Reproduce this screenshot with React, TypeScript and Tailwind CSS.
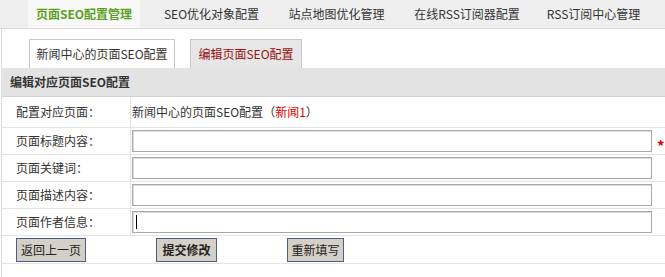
import React from 'react';

const topTabs = [
  { label: 'SEO优化对象配置', ml: 'ml-[28px]', w: 'w-[87px]' },
  { label: '站点地图优化管理', ml: 'ml-[35px]', w: 'w-[93px]' },
  { label: '在线RSS订阅器配置', ml: 'ml-[35px]', w: 'w-[98px]' },
  { label: 'RSS订阅中心管理', ml: 'ml-[34px]', w: 'w-[87px]' },
];

const fields = [
  { label: '页面标题内容：', required: true },
  { label: '页面关键词：' },
  { label: '页面描述内容：' },
  { label: '页面作者信息：', caret: true },
];

const FakeInput: React.FC<{ caret?: boolean }> = ({ caret }) => (
  <div className="ml-[1px] h-[22px] w-[520px] border border-[#a9a9a9] bg-white shadow-[inset_1px_1px_0_#dcdcdc] flex items-center">
    {caret && <div className="ml-[3px] h-[14px] w-px bg-black" />}
  </div>
);

const App: React.FC = () => {
  return (
    <div className="w-[665px] h-[277px] overflow-hidden bg-white text-[12px] leading-none text-[#333] font-['SimSun','Noto_Sans_CJK_SC',sans-serif]">
      {/* top tabs */}
      <div className="h-[29px] bg-[#efefef] border-b border-[#dadada] flex items-stretch">
        <div className="ml-[28px] w-[112px] bg-[#f8f8f8] flex items-center justify-center font-bold text-[#5b9f1f]">
          页面SEO配置管理
        </div>
        {topTabs.map((t) => (
          <div key={t.label} className={`${t.ml} ${t.w} flex items-center justify-center whitespace-nowrap`}>
            {t.label}
          </div>
        ))}
      </div>

      <div className="ml-[1px] h-[248px] border-l border-[#dedede]">
        {/* sub tabs */}
        <div className="h-[39px] flex items-end">
          <div className="ml-[27px] w-[146px] h-[29px] bg-white border border-b-0 border-[#c8c8c8] flex items-center justify-center whitespace-nowrap">
            新闻中心的页面SEO配置
          </div>
          <div className="ml-[15px] w-[112px] h-[29px] bg-[#e6e6e6] border border-b-0 border-[#c8c8c8] flex items-center justify-center whitespace-nowrap text-[#9a0f0f]">
            编辑页面SEO配置
          </div>
        </div>

        {/* header */}
        <div className="h-[29px] bg-[#e3e3e3] border-b border-[#d3d3d3] flex items-center pl-[8px] font-bold">
          编辑对应页面SEO配置
        </div>

        {/* rows */}
        <div className="h-[31px] flex border-b border-[#e3e3e3]">
          <div className="w-[129px] border-r border-[#e3e3e3] flex items-center pl-[14px]">配置对应页面：</div>
          <div className="flex items-center pl-px whitespace-nowrap">
            新闻中心的页面SEO配置（ <span className="text-[#e00000]">新闻1</span> ）
          </div>
        </div>

        {fields.map((f) => (
          <div key={f.label} className="h-[27px] flex border-b border-[#e3e3e3]">
            <div className="w-[129px] border-r border-[#e3e3e3] flex items-center pl-[14px]">{f.label}</div>
            <div className="flex items-center">
              <FakeInput caret={f.caret} />
              {f.required && <span className="ml-[5px] mt-[9px] text-[15px] font-bold text-[#e00000]">*</span>}
            </div>
          </div>
        ))}

        <div className="h-[28px] flex items-center border-b border-[#e3e3e3]">
          <button className="ml-[14px] w-[70px] h-[24px] bg-[#d4d0c8] border border-[#4c5f86] text-[#222]">返回上一页</button>
          <button className="ml-[70px] w-[61px] h-[24px] bg-[#d4d0c8] border border-[#4c5f86] font-bold text-[#222]">提交修改</button>
          <button className="ml-[70px] w-[57px] h-[24px] bg-[#d4d0c8] border border-[#4c5f86] text-[#222]">重新填写</button>
        </div>
      </div>
    </div>
  );
};

export default App;
